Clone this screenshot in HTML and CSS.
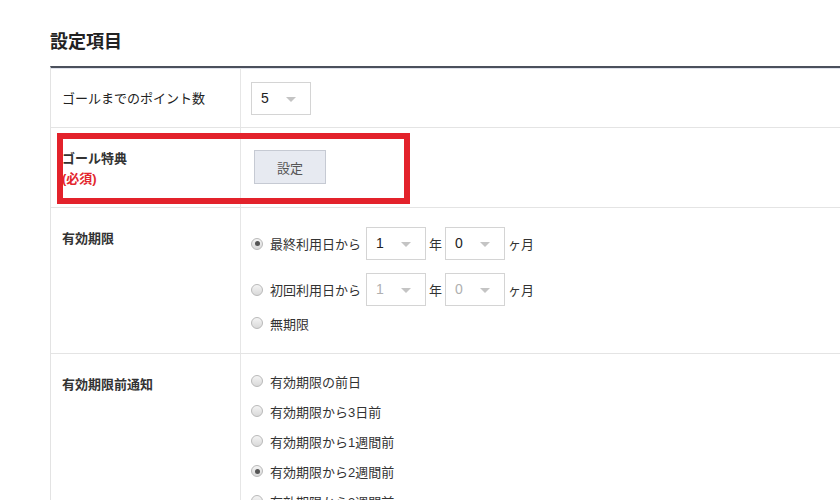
FILE: index.html
```html
<!DOCTYPE html>
<html lang="ja">
<head>
    <meta charset="UTF-8">
    <meta name="viewport" content="width=device-width, initial-scale=1.0">
    <title>設定項目</title>
    <link rel="stylesheet" href="styles.css">
</head>
<body>

    <div class="page">
        <h2 class="section-title">設定項目</h2>

        <div class="settings">
            <div class="row row-points">
                <div class="label light">ゴールまでのポイント数</div>
                <div class="value">
                    <div class="select"><span>5</span><i class="caret"></i></div>
                </div>
            </div>

            <div class="row row-bonus">
                <div class="label">ゴール特典<br><span class="required">(必須)</span></div>
                <div class="value">
                    <button class="btn">設定</button>
                </div>
                <div class="highlight"></div>
            </div>

            <div class="row row-expire">
                <div class="label">有効期限</div>
                <div class="value">
                    <div class="option">
                        <span class="radio checked"></span>
                        <span class="opt-text">最終利用日から</span>
                        <div class="select"><span>1</span><i class="caret"></i></div>
                        <span class="unit">年</span>
                        <div class="select"><span>0</span><i class="caret"></i></div>
                        <span class="unit">ヶ月</span>
                    </div>
                    <div class="option">
                        <span class="radio"></span>
                        <span class="opt-text">初回利用日から</span>
                        <div class="select disabled"><span>1</span><i class="caret"></i></div>
                        <span class="unit">年</span>
                        <div class="select disabled"><span>0</span><i class="caret"></i></div>
                        <span class="unit">ヶ月</span>
                    </div>
                    <div class="option short">
                        <span class="radio"></span>
                        <span class="opt-text">無期限</span>
                    </div>
                </div>
            </div>

            <div class="row row-notice">
                <div class="label">有効期限前通知</div>
                <div class="value">
                    <div class="option line"><span class="radio"></span><span class="opt-text">有効期限の前日</span></div>
                    <div class="option line"><span class="radio"></span><span class="opt-text">有効期限から3日前</span></div>
                    <div class="option line"><span class="radio"></span><span class="opt-text">有効期限から1週間前</span></div>
                    <div class="option line"><span class="radio checked"></span><span class="opt-text">有効期限から2週間前</span></div>
                    <div class="option line"><span class="radio"></span><span class="opt-text">有効期限から3週間前</span></div>
                </div>
            </div>
        </div>
    </div>

</body>
</html>
```

FILE: styles.css
```css
body {
    margin: 0;
    font-family: Arial, "Liberation Sans", "Noto Sans CJK JP", sans-serif;
    font-size: 13px;
    color: #333;
    background-color: #fff;
    overflow: hidden;
}
.page {
    padding: 31px 0 0 50px;
}
.section-title {
    margin: 0 0 13px;
    font-size: 18px;
    line-height: 22px;
    font-weight: bold;
    color: #222;
}
.settings {
    width: 820px;
    border-top: 2px solid #4b505c;
    border-left: 1px solid #e3e3e3;
    box-shadow: inset 0 1px 0 #dfe2ec;
}
.row {
    position: relative;
    display: grid;
    grid-template-columns: 190px 1fr;
    border-bottom: 1px solid #e4e4e4;
}
.label {
    padding: 21px 12px 0 11px;
    line-height: 20px;
    font-weight: bold;
    color: #333;
    border-right: 1px solid #e6e6e6;
}
.label.light {
    font-weight: normal;
    color: #222;
}
.required {
    color: #e3262d;
}
.value {
    padding: 14px 12px 12px 10px;
}
.row-bonus .value {
    padding: 22px 12px 23px 13px;
}
.row-expire .value {
    padding: 19px 12px 20px 10px;
}
.row-notice .value {
    padding: 12px 12px 0 10px;
}

/* select boxes */
.select {
    position: relative;
    display: inline-block;
    box-sizing: border-box;
    width: 60px;
    height: 33px;
    padding-left: 9px;
    line-height: 31px;
    font-size: 14px;
    color: #222;
    background: #fff;
    border: 1px solid #d4d4d4;
}
.select.disabled {
    color: #b0b0b0;
}
.caret {
    position: absolute;
    right: 14px;
    top: 14px;
    width: 0;
    height: 0;
    border-left: 5px solid transparent;
    border-right: 5px solid transparent;
    border-top: 5px solid #c4c4c4;
}

/* button */
.btn {
    width: 72px;
    height: 34px;
    padding: 0;
    font-family: inherit;
    font-size: 13px;
    color: #555;
    background-color: #e7eaf1;
    border: 1px solid #c6cad3;
    border-radius: 0;
}

/* radios */
.option {
    display: flex;
    align-items: center;
    height: 33px;
}
.option + .option {
    margin-top: 13px;
}
.option.short {
    height: 20px;
    margin-top: 7px;
}
.option.line {
    height: 30px;
    margin-top: 0;
}
.radio {
    position: relative;
    box-sizing: border-box;
    width: 12px;
    height: 12px;
    margin-right: 7px;
    border-radius: 50%;
    border: 1px solid #b9b9b9;
    background: linear-gradient(#f4f4f4, #d9d9d9);
    flex: none;
}
.radio.checked::after {
    content: "";
    position: absolute;
    left: 2.5px;
    top: 2.5px;
    width: 5px;
    height: 5px;
    border-radius: 50%;
    background: #555;
}
.opt-text {
    color: #333;
    margin-right: 5px;
}
.unit {
    margin: 0 3px;
}

/* annotation box drawn over the row */
.highlight {
    position: absolute;
    left: 6px;
    top: 5px;
    width: 353px;
    height: 71px;
    box-sizing: border-box;
    border: 6px solid #e3222b;
    pointer-events: none;
}
```
